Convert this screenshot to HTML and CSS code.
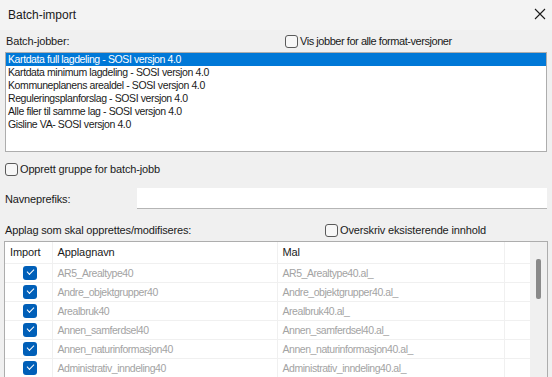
FILE: index.html
```html
<!DOCTYPE html>
<html lang="no">
<head>
    <meta charset="UTF-8">
    <title>Batch-import</title>
    <link rel="stylesheet" href="styles.css">
</head>
<body>
    <div class="window">
        <div class="titlebar">
            <span class="title">Batch-import</span>
            <svg class="close" width="12" height="12" viewBox="0 0 12 12">
                <path d="M1 1 L11 11 M11 1 L1 11" stroke="#1a1a1a" stroke-width="1.1" fill="none"/>
            </svg>
        </div>

        <div class="dialog">
            <div class="head-row">
                <span class="label">Batch-jobber:</span>
                <label class="check tight"><span class="box"></span>Vis jobber for alle format-versjoner</label>
            </div>

            <ul class="listbox">
                <li class="selected">Kartdata full lagdeling - SOSI versjon 4.0</li>
                <li>Kartdata minimum lagdeling - SOSI versjon 4.0</li>
                <li>Kommuneplanens arealdel - SOSI versjon 4.0</li>
                <li>Reguleringsplanforslag - SOSI versjon 4.0</li>
                <li>Alle filer til samme lag - SOSI versjon 4.0</li>
                <li>Gisline VA- SOSI versjon 4.0</li>
            </ul>

            <label class="check group-check"><span class="box"></span>Opprett gruppe for batch-jobb</label>

            <div class="prefix-row">
                <span class="label">Navneprefiks:</span>
                <div class="input"></div>
            </div>

            <div class="applag-row">
                <span class="label">Applag som skal opprettes/modifiseres:</span>
                <label class="check"><span class="box"></span>Overskriv eksisterende innhold</label>
            </div>

            <div class="grid-wrap">
                <table class="grid">
                    <thead>
                        <tr>
                            <th class="col-import">Import</th>
                            <th class="col-name">Applagnavn</th>
                            <th class="col-mal">Mal</th>
                            <th class="col-rest"></th>
                        </tr>
                    </thead>
                    <tbody>
                        <tr><td class="col-import"><span class="box on"></span></td><td>AR5_Arealtype40</td><td>AR5_Arealtype40.al_</td><td></td></tr>
                        <tr><td class="col-import"><span class="box on"></span></td><td>Andre_objektgrupper40</td><td>Andre_objektgrupper40.al_</td><td></td></tr>
                        <tr><td class="col-import"><span class="box on"></span></td><td>Arealbruk40</td><td>Arealbruk40.al_</td><td></td></tr>
                        <tr><td class="col-import"><span class="box on"></span></td><td>Annen_samferdsel40</td><td>Annen_samferdsel40.al_</td><td></td></tr>
                        <tr><td class="col-import"><span class="box on"></span></td><td>Annen_naturinformasjon40</td><td>Annen_naturinformasjon40.al_</td><td></td></tr>
                        <tr><td class="col-import"><span class="box on"></span></td><td>Administrativ_inndeling40</td><td>Administrativ_inndeling40.al_</td><td></td></tr>
                    </tbody>
                </table>
                <div class="scrollbar"><div class="thumb"></div></div>
            </div>
        </div>
    </div>
</body>
</html>
```

FILE: styles.css
```css
:root {
    --bg: #f0f0f0;
    --title-bg: #f3f3f3;
    --text: #1a1a1a;
    --muted: #a3a3a3;
    --border: #adadad;
    --line: #f0f0f0;
    --select: #0078d7;
    --check: #005fb8;
}

* {
    margin: 0;
    padding: 0;
    box-sizing: border-box;
}

body {
    font-family: 'Liberation Sans', Arial, sans-serif;
    font-size: 12px;
    color: var(--text);
    background-color: var(--bg);
    width: 552px;
    height: 377px;
    overflow: hidden;
}

.titlebar {
    height: 30px;
    background-color: var(--title-bg);
    display: flex;
    align-items: center;
    justify-content: space-between;
    padding: 0 6px 0 8px;
}

.title {
    font-size: 12px;
}

.close {
    margin-bottom: 2px;
}

.dialog {
    padding: 0 4px 0 5px;
    display: flex;
    flex-direction: column;
}

.label {
    font-size: 11px;
    letter-spacing: -0.15px;
}

.check {
    display: flex;
    align-items: center;
    font-size: 11px;
    letter-spacing: -0.15px;
}

.check.tight {
    letter-spacing: -0.45px;
}

.box {
    display: inline-block;
    width: 13px;
    height: 13px;
    border: 1px solid #5a5a5a;
    border-radius: 3px;
    margin-right: 2px;
    background-color: #f7f7f7;
}

.box.on {
    width: 14px;
    height: 14px;
    border: none;
    background-color: var(--check);
    position: relative;
    margin: 0;
}

.box.on::after {
    content: "";
    position: absolute;
    left: 4px;
    top: 3px;
    width: 6px;
    height: 3px;
    border-left: 1px solid #fff;
    border-bottom: 1px solid #fff;
    transform: rotate(-45deg);
}

.head-row {
    height: 22px;
    display: grid;
    grid-template-columns: 279px 1fr;
    align-items: center;
    padding-left: 1px;
}

.listbox {
    list-style: none;
    height: 100px;
    background-color: #fff;
    border: 1px solid var(--border);
    font-size: 10.5px;
    letter-spacing: -0.4px;
    line-height: 13px;
    margin-right: 1px;
}

.listbox li {
    padding-left: 2px;
}

.listbox li.selected {
    background-color: var(--select);
    color: #fff;
}

.group-check {
    margin-top: 10px;
    height: 14px;
}

.prefix-row {
    margin-top: 12px;
    display: grid;
    grid-template-columns: 132px 1fr;
    align-items: center;
}

.input {
    height: 21px;
    background-color: #fff;
    border-bottom: 1px solid #b5b5b5;
    margin-right: 1px;
}

.applag-row {
    margin-top: 12px;
    height: 20px;
    display: grid;
    grid-template-columns: 320px 1fr;
    align-items: center;
    padding-bottom: 2px;
}

.grid-wrap {
    position: relative;
    margin-left: -1px;
    border: 1px solid var(--border);
    background-color: #fff;
    height: 140px;
    overflow: hidden;
}

.grid {
    border-collapse: collapse;
    width: 526px;
    table-layout: fixed;
}

.grid th,
.grid td {
    border-right: 1px solid var(--line);
    border-bottom: 1px solid var(--line);
    text-align: left;
    white-space: nowrap;
    padding: 0 0 0 5px;
}

.grid th {
    height: 21px;
    font-weight: normal;
    font-size: 11px;
    letter-spacing: -0.1px;
    color: var(--text);
}

.grid td {
    height: 19px;
    color: var(--muted);
    font-size: 10.5px;
    letter-spacing: -0.45px;
}

.grid .col-import {
    width: 47px;
}

.grid td.col-import {
    padding: 0 0 0 18px;
    vertical-align: middle;
}

.grid td.col-import .box {
    display: block;
}

.grid .col-name {
    width: 225px;
}

.grid .col-mal {
    width: 227px;
}

.scrollbar {
    position: absolute;
    top: 0;
    right: 0;
    width: 16px;
    height: 100%;
    background-color: #f0f0f0;
}

.thumb {
    position: absolute;
    top: 17px;
    left: 5px;
    width: 5px;
    height: 40px;
    border-radius: 2px;
    background-color: #8a8a8a;
}
```
